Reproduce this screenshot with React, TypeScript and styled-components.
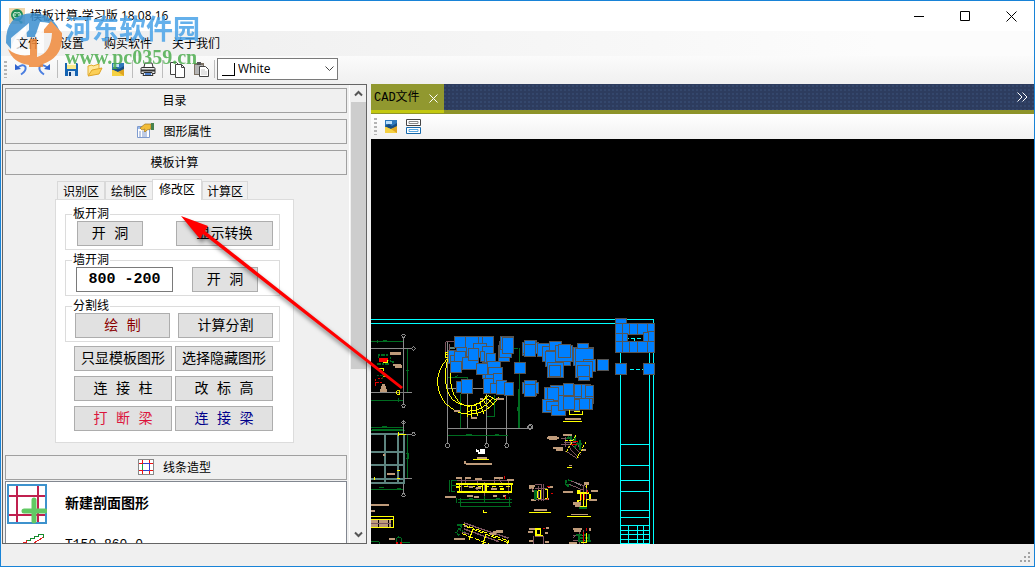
import React from "react";
import styled, { createGlobalStyle } from "styled-components";

const song = `"Noto Sans CJK SC", "Liberation Sans", sans-serif`;
const songFixed = `"Liberation Mono", "Noto Sans CJK SC", monospace`;

const GlobalStyle = createGlobalStyle`
  *, *::before, *::after { box-sizing: border-box; }
  body { margin: 0; background: #f0f0f0; color: #000; font: 12px/16px ${song}; }
  button, input, select { font: inherit; color: inherit; border-radius: 0; }
  svg { display: block; flex: none; }
`;

const Window = styled.div`
  position: relative;
  display: flex;
  flex-direction: column;
  height: 100vh;
  overflow: hidden;
  border: 1px solid #1883d7;
  background: #f0f0f0;
`;

const TitleBar = styled.header`
  display: flex;
  align-items: center;
  flex: none;
  height: 30px;
  padding: 0 8px;
  background: #fff;
`;

const Title = styled.h1`
  flex: 1;
  margin: 0 0 0 5px;
  font: 12px/16px "Open Sans", "Noto Sans CJK SC", sans-serif;
`;

const WindowButtons = styled.div`
  display: flex;
  margin-right: -8px;
`;

const WindowButton = styled.button`
  display: flex;
  align-items: center;
  justify-content: center;
  width: 46px;
  height: 29px;
  padding: 0;
  border: 0;
  background: none;
`;

const MenuBar = styled.nav`
  display: flex;
  align-items: center;
  flex: none;
  gap: 20px;
  height: 25px;
  padding: 0 15px 1px;
  background: linear-gradient(90deg, #f0f0f0 20%, #fcfcfc 85%);
`;

const MenuLink = styled.a`
  color: #000;
  text-decoration: none;
`;

const ToolBar = styled.div`
  display: flex;
  align-items: center;
  flex: none;
  height: 28px;
  padding: 0 0 2px 3px;
  background: linear-gradient(#fbfbfb, #f0f0f0);
`;

const Grip = styled.span`
  width: 3px;
  height: 17px;
  margin-right: 2px;
  background: repeating-linear-gradient(#b4b4b4 0 2px, transparent 2px 4px);
`;

const IconButton = styled.button`
  display: flex;
  align-items: center;
  justify-content: center;
  width: 23px;
  height: 22px;
  padding: 0;
  border: 0;
  background: none;
`;

const Separator = styled.span<{ $tight?: boolean }>`
  width: 1px;
  height: 18px;
  margin: 0 ${(p) => (p.$tight ? 2 : 3)}px;
  background: #bdbdbd;
`;

const ColorField = styled.label`
  position: relative;
  display: block;
`;

const ColorSelect = styled.select`
  appearance: none;
  display: block;
  width: 121px;
  height: 22px;
  padding: 0 20px;
  border: 1px solid #7a7a7a;
  background: #fff;
  font: 12px/18px "Open Sans", sans-serif;
`;

const Swatch = styled.span`
  position: absolute;
  left: 5px;
  top: 5px;
  width: 13px;
  height: 13px;
  border: solid #000;
  border-width: 0 1px 1px 0;
  background: #fff;
`;

const SelectArrow = styled.svg`
  position: absolute;
  right: 4px;
  top: 8px;
`;

const Body = styled.main`
  display: flex;
  flex: 1;
  min-height: 0;
  gap: 4px;
  padding-left: 1px;
`;

const SidePanel = styled.aside`
  display: flex;
  flex: none;
  width: 365px;
  border: 1px solid #646464;
`;

const SideContent = styled.div`
  flex: 1;
  overflow: hidden;
  padding: 3px 2px 0;
`;

const SectionButton = styled.button<{ $spaced?: boolean }>`
  display: flex;
  align-items: center;
  justify-content: center;
  gap: 9px;
  width: 100%;
  height: 25px;
  margin-bottom: ${(p) => (p.$spaced ? 6 : 0)}px;
  padding: 0 3px 2px 0;
  border: 1px solid #a0a0a0;
  background: #f0f0f0;
`;

const ScrollBar = styled.div`
  display: flex;
  flex-direction: column;
  align-items: center;
  width: 17px;
  border-left: 1px solid #fff;
`;

const ScrollButton = styled.button`
  display: flex;
  align-items: center;
  justify-content: center;
  width: 16px;
  height: 17px;
  padding: 0;
  border: 0;
  background: #f0f0f0;
`;

const ScrollTrack = styled.div`
  flex: 1;
  width: 15px;
`;

const ScrollThumb = styled.div`
  height: 63%;
  background: #cdcdcd;
`;

const Editor = styled.section`
  width: 239px;
  margin: 4px 0 12px 50px;
`;

const TabRow = styled.div`
  display: flex;
  align-items: flex-end;
  padding: 0 2px;
`;

const Tab = styled.button<{ $active?: boolean }>`
  position: relative;
  height: ${(p) => (p.$active ? 21 : 18)}px;
  margin-bottom: ${(p) => (p.$active ? -1 : 0)}px;
  margin-left: ${(p) => (p.$active ? -1 : 0)}px;
  padding: 0 ${(p) => (p.$active ? 6 : 5)}px ${(p) => (p.$active ? 2 : 0)}px;
  border: 1px solid #d9d9d9;
  border-bottom: 0;
  background: ${(p) => (p.$active ? "#fff" : "#f0f0f0")};
  line-height: 16px;

  & + & { border-left-width: ${(p) => (p.$active ? 1 : 0)}px; }
  &:last-child { padding: 0 4px; }
`;

const TabPage = styled.div`
  height: 244px;
  padding: 7px 13px 0 9px;
  border: 1px solid #dcdcdc;
  background: #fff;
`;

const Group = styled.fieldset`
  height: 43px;
  margin: 0 0 3px;
  padding: 0 6px 0 9px;
  border: 1px solid #dcdcdc;
  min-width: 0;
`;

const Legend = styled.legend`
  height: 14px;
  padding: 0 1px;
  margin-left: -3px;
  line-height: 12px;
`;

const GroupRow = styled.div<{ $packed?: boolean; $inset?: number }>`
  display: flex;
  justify-content: ${(p) => (p.$packed ? "flex-start" : "space-between")};
  gap: ${(p) => (p.$packed ? 19 : 8)}px;
  padding-left: ${(p) => p.$inset ?? 0}px;
`;

const ActionButton = styled.button<{ $width?: number; $color?: string }>`
  width: ${(p) => (p.$width ? p.$width + "px" : "auto")};
  height: 25px;
  padding: 0;
  border: 1px solid #adadad;
  background: #e1e1e1;
  color: ${(p) => p.$color ?? "#000"};
  font: 14px/20px ${songFixed};
  white-space: pre;
`;

const SizeInput = styled.input`
  width: 97px;
  height: 25px;
  padding: 0;
  border: 1px solid #7a7a7a;
  background: #fff;
  font: bold 15px/20px ${songFixed};
  text-align: center;
`;

const ActionGrid = styled.div`
  display: grid;
  grid-template-columns: 1fr 1fr;
  gap: 5px 3px;
  margin: 4px 7px 0 9px;
`;

const ShapeList = styled.ul`
  margin: 1px 0 0;
  padding: 1px;
  list-style: none;
  border: 1px solid #828790;
  background: #fff;
`;

const ShapeItem = styled.li<{ $strong?: boolean }>`
  display: flex;
  align-items: center;
  gap: 18px;
  height: 41px;
  font: ${(p) => (p.$strong ? "bold 14px" : "13px")} / 18px ${songFixed};
`;

const Document = styled.section`
  display: flex;
  flex: 1;
  flex-direction: column;
  min-width: 0;
`;

const DocTabs = styled.div`
  display: flex;
  align-items: stretch;
  flex: none;
  height: 30px;
  border-bottom: 4px solid #8e942a;
  background: #2d3c5e radial-gradient(#34476c 1px, transparent 1px) 0 0 / 4px 4px;
`;

const DocTab = styled.div`
  display: flex;
  align-items: center;
  gap: 9px;
  width: 73px;
  height: 29px;
  padding: 2px 0 0 3px;
  border-bottom: 3px solid #c3c80f;
  background: #91982f;
  font: 12px/16px ${songFixed};
`;

const PlainButton = styled.button`
  display: flex;
  align-items: center;
  padding: 0;
  border: 0;
  background: none;
`;

const Overflow = styled(PlainButton)`
  margin: 0 6px 0 auto;
`;

const DocToolBar = styled(ToolBar)`
  height: 25px;
  padding: 0 0 0 3px;
  background: linear-gradient(#fff, #f1f1f1);
`;

const Canvas = styled.div`
  flex: 1;
  min-height: 0;
  overflow: hidden;
  background: #000;
`;

const StatusBar = styled.footer`
  display: flex;
  align-items: flex-end;
  justify-content: flex-end;
  flex: none;
  height: 22px;
  padding: 3px;
`;

const Watermark = styled.div`
  position: absolute;
  left: 4px;
  top: 10px;
  display: flex;
  gap: 3px;
  opacity: 0.85;
  pointer-events: none;
`;

const WatermarkText = styled.div`
  display: flex;
  flex-direction: column;
`;

const WatermarkName = styled.span`
  color: #4aa3e8;
  font: bold 27px/34px "Noto Sans CJK SC", sans-serif;
`;

const WatermarkSite = styled.span`
  color: #4fae50;
  font: bold 20px/24px "Liberation Serif", serif;
`;

const Pointer = styled.svg`
  position: absolute;
  left: 170px;
  top: 200px;
  pointer-events: none;
  filter: drop-shadow(2px 4px 2px rgba(0, 0, 0, 0.5));
`;

const AppIcon = () => (
  <svg width="16" height="16" viewBox="0 0 16 16">
    <rect width="16" height="16" fill="#efd6ac" />
    <circle cx="8" cy="7" r="6" fill="#1d8c55" />
    <path d="M4 7q1-4 4-2q3-2 4 2q-1 4-4 3q-3 1-4-3M6 6v2M10 6v2" fill="none" stroke="#e4f5e6" />
    <path d="M8 11l6 3-2 2z" fill="#1d8c55" />
  </svg>
);

const Undo = ({ flip }: { flip?: boolean }) => (
  <svg width="14" height="14" viewBox="0 0 14 14">
    <g transform={flip ? "translate(14 0) scale(-1 1)" : undefined} fill="none">
      <path d="M3 6Q9 1 11.500 5Q12.500 9 7 12.500" stroke="#4c7fe0" strokeWidth="2" />
      <path d="M1 2v6l6-1z" fill="#2e62cf" />
    </g>
  </svg>
);

const SaveIcon = () => (
  <svg width="15" height="15" viewBox="0 0 15 15">
    <path d="M1 1h12l1 1v12H1z" fill="#1564b3" />
    <path d="M3 1h9v6H3z" fill="#f8e98c" />
    <path d="M3 1h9v2H3z" fill="#fffbe0" />
    <path d="M4 9h7v5H4z" fill="#dce9f7" />
    <path d="M5 10h2v4H5z" fill="#123c75" />
  </svg>
);

const OpenIcon = () => (
  <svg width="16" height="15" viewBox="0 0 16 15">
    <path d="M1 13V4l4-1 1 1 6-2v4" fill="#ffe79a" stroke="#e3ad2e" />
    <path d="M1 14l4-6 10-2-3 6z" fill="#fbcf57" stroke="#dea324" />
  </svg>
);

const ImageIcon = () => (
  <svg width="14" height="15" viewBox="0 0 14 15">
    <path d="M1 1h12v13H1z" fill="#e9bd33" />
    <path d="M1 1h12v7H1z" fill="#2f78bb" />
    <path d="M2 2h6v3H2z" fill="#bde0fa" />
    <path d="M1 7l4-2 3 2 5-3v6L8 11z" fill="#174d82" />
    <path d="M1 8l6 2 6-2v6H1z" fill="#f5d142" />
    <path d="M7 10l6-3v7z" fill="#dfa521" />
  </svg>
);

const PrintIcon = () => (
  <svg width="16" height="15" viewBox="0 0 16 15" fill="none" stroke="#333">
    <path d="M4 5l1-4h7l1 4" fill="#fff" />
    <path d="M1 6.500q0-1 1-1h12q1 0 1 1v5H1z" fill="#ececec" />
    <path d="M1 8.500h14" strokeWidth="2" />
    <path d="M4 10.500h8l1 3H3z" fill="#e6effc" />
    <path d="M5 12h6" stroke="#4f82cf" strokeWidth="2" />
  </svg>
);

const CopyIcon = () => (
  <svg width="17" height="17" viewBox="0 0 17 17" fill="#fff" stroke="#444">
    <path d="M1.500 1.500h6l3 3v9h-9z" />
    <path d="M6.500 3.500h6l3 3v10h-9z" />
    <path d="M12.500 3.500v3h3" fill="none" />
  </svg>
);

const PasteIcon = () => (
  <svg width="16" height="16" viewBox="0 0 16 16">
    <path d="M1 2h10v12H1z" fill="#7d7264" />
    <path d="M2 4h8v9H2z" fill="#b5b5b5" />
    <path d="M4 1h4v3H4z" fill="#555" />
    <path d="M6.500 5.500h6l3 3v7h-9z" fill="#fff" stroke="#444" />
    <path d="M8 9h4M8 11h6M8 13h6" stroke="#c9c9c9" />
  </svg>
);

const PropertyIcon = () => (
  <svg width="17" height="15" viewBox="0 0 17 15">
    <path d="M.500 3.500h12v11H.500z" fill="#fff" stroke="#7e9bcf" />
    <path d="M1 4h11v2H1z" fill="#9bb9e8" />
    <path d="M2 9h2M5 9h5M2 11h2M5 11h5M2 13h2M5 13h5" stroke="#7d97cb" />
    <path d="M3 5l5-4 6 0v5l-4 1-2 2-1-1 1-2-3 1z" fill="#f3bd38" stroke="#9d7523" strokeWidth=".7" />
    <path d="M14 0h3v7h-3z" fill="#47824e" />
  </svg>
);

const LinesIcon = () => (
  <svg width="16" height="16" viewBox="0 0 16 16" fill="none" shapeRendering="crispEdges">
    <path d="M.500 .500h15v15H.500z" fill="#fff" stroke="#888" />
    <path d="M4.500 1v14M11.500 1v14M1 4.500h14M1 11.500h14" stroke="#e11" />
    <path d="M4.500 5v6" stroke="#2a4" />
    <path d="M5 4.500h6.500v7H5" stroke="#34c" />
  </svg>
);

const NewSectionIcon = () => (
  <svg width="40" height="40" viewBox="0 0 40 40" fill="none">
    <path d="M1 1h38v38H1z" fill="#fff" stroke="#3d92cd" strokeWidth="2" />
    <path d="M10 2v36M31 2v36M2 12h36M2 31h36" stroke="#c0204f" strokeWidth="2" />
    <path d="M27 16v21M17 27h21" stroke="#62c964" strokeWidth="5" strokeLinecap="round" />
  </svg>
);

const StairIcon = () => (
  <svg width="40" height="40" viewBox="0 0 40 40" fill="none" shapeRendering="crispEdges">
    <path d="M16 17.500h3v-2h4v-2h4v-2h4v-2h5v3L22 21" stroke="#e02020" />
    <path d="M20 15.500h3v-2h4v-2h4v-2h5v3" stroke="#148a2c" />
  </svg>
);

const LayersIcon = () => (
  <svg width="15" height="15" viewBox="0 0 15 15" fill="#fff">
    <path d="M.500 .500h14v6H.500z" stroke="#444" />
    <path d="M3 2.500h9v2H3z" stroke="#888" />
    <path d="M.500 8.500h14v6H.500z" stroke="#1769ab" />
    <path d="M3 10.500h9v2H3z" stroke="#58a6df" />
  </svg>
);

type Box = [number, number, number, number];

const stairNodes: Box[] = [
  [249, 120, 34, 40], [268, 79, 34, 34], [312, 79, 34, 34], [340, 79, 34, 34], [352, 79, 34, 34],
  [300, 79, 40, 60], [325, 100, 40, 44], [350, 108, 36, 50], [256, 134, 34, 38], [272, 110, 34, 36],
  [256, 152, 34, 36], [268, 122, 34, 34], [290, 142, 50, 38], [308, 115, 34, 38], [345, 122, 15, 32],
  [362, 130, 30, 50], [350, 180, 45, 26], [366, 152, 40, 44], [334, 158, 35, 36], [370, 172, 42, 46],
  [360, 192, 48, 36], [355, 204, 40, 46], [384, 190, 30, 58], [376, 218, 34, 34], [392, 210, 34, 45],
  [418, 216, 28, 40], [272, 213, 28, 36], [288, 207, 36, 44], [398, 104, 36, 52], [402, 92, 38, 50],
  [406, 79, 40, 40], [411, 80, 34, 50], [447, 156, 36, 36], [472, 97, 36, 40], [478, 90, 36, 34],
  [472, 216, 36, 36], [478, 210, 36, 48],
];

const bayNodes: Box[] = [
  [36, 96, 50, 36], [42, 90, 36, 40], [42, 103, 36, 36], [13, 156, 34, 35], [82, 99, 54, 40],
  [96, 108, 64, 46], [118, 94, 36, 34], [108, 120, 74, 46], [106, 122, 32, 48], [136, 104, 52, 50],
  [145, 102, 36, 40], [112, 156, 48, 46], [118, 165, 34, 36], [188, 112, 62, 56], [202, 99, 34, 34],
  [196, 115, 54, 40], [220, 146, 36, 38], [196, 154, 52, 48], [205, 177, 34, 34], [202, 166, 36, 34],
  [262, 148, 34, 34], [36, 216, 50, 34], [42, 210, 36, 44], [42, 223, 36, 36], [102, 232, 62, 60],
  [120, 226, 60, 66], [112, 232, 34, 40], [158, 220, 34, 74], [192, 223, 22, 60], [212, 223, 30, 60],
  [226, 226, 24, 54], [97, 268, 34, 40], [108, 274, 70, 28], [124, 284, 44, 34], [186, 264, 62, 34],
  [205, 263, 34, 36], [184, 268, 24, 34], [145, 256, 38, 46], [160, 258, 34, 40],
  [226, 226, 24, 34], [192, 223, 22, 38], [158, 220, 34, 38],
];

const frameNodes: Box[] = [
  [316, 25, 34, 34], [316, 40, 24, 30], [316, 68, 22, 30], [316, 94, 24, 34], [411, 40, 23, 26],
  [411, 64, 23, 30], [411, 92, 23, 36], [337, 40, 24, 34], [358, 40, 24, 34], [380, 40, 34, 34],
  [400, 66, 16, 30], [336, 70, 16, 26], [337, 94, 24, 34], [358, 94, 24, 34], [380, 94, 34, 34],
  [316, 160, 34, 34], [400, 160, 34, 34],
];

const Nodes = ({ items }: { items: Box[] }) => (
  <g fill="#0080ff" stroke="#555" strokeWidth="3">
    {items.map(([x, y, w, h], i) => (
      <rect key={i} x={x + 1} y={y + 1} width={w - 2} height={h - 2} />
    ))}
  </g>
);

const G = "#006c20";
const B = "#bf9b7a";
const M = "#7d5560";
const Y = "#ff0";
const C = "#0ff";
const W = "#8a8a8a";
const T = "#5d8580";

const Drawing = () => (
  <svg width="100%" height="100%" fill="none" strokeWidth="3" shapeRendering="crispEdges">
    {/* column plan and spiral stair */}
    <g transform="translate(-5.800 171.200) scale(.33333)">
      <path d="M0 28H866M0 40H752" stroke={C} />
      <path d="M0 94H115M127 115V247M0 270H115M36 90V98M52 90h14M100 262v12M0 352H115M50 348h16M122 180h8M20 358H115" stroke={G} />
      <path d="M115 82V282M0 115H140M0 247H140M115 342V390M115 372H140" stroke={W} />
      <g stroke={W}>
        <circle cx="115" cy="77" r="5" /><circle cx="145" cy="115" r="5" />
        <circle cx="115" cy="287" r="5" /><circle cx="115" cy="337" r="5" /><circle cx="145" cy="372" r="5" />
      </g>
      <path d="M38 134h34M34 162h40M40 130v16M76 140v14M52 184v24M36 196h20M66 150l22 6" stroke={G} strokeWidth="5" strokeDasharray="6 2" />
      <path d="M78 129h30M84 164h24M88 168h22M46 232h16M44 240h20M50 226h8M74 130h10" stroke={B} strokeWidth="8" />
      <path d="M42 142h26v14H42z" fill="#f00" />
      <path d="M30 206v20M28 216h22M38 204h12" stroke="#e00000" strokeDasharray="6 2" />
      <path d="M42 176h14v6M52 200h14M54 158h14M66 148v8M94 242h10v10H94zM98 372h24M100 368v8" stroke={Y} />
      <path d="M247 95V350M307 230V355M364 240V380M424 250V380M247 355H484M247 235H360M247 355V390" stroke={W} />
      <path d="M241 126V95H270M252 120V100" stroke={M} />
      <path d="M254 114h14" stroke={T} strokeWidth="6" />
      <path d="M247 202H307V235M287 250V355M387 255V320H364M461 235V355M435 355H465M247 376H428M305 372h16M388 372h12M268 200l10-4" stroke={G} />
      <path d="M463 112V235" stroke={G} strokeDasharray="12 8" />
      <circle cx="493" cy="351" r="6" stroke={W} />
      <g stroke={Y}>
        <path d="M247 145A97 97 0 1 0 400 260M247 145C239 185 238 225 250 250A66 66 0 0 0 365 255M258 184C250 230 270 285 310 288Q350 284 370 255" />
        <path d="M240 126h12v16h-12zM242 134h9M306 286V320M318 286v36M332 284l5 34M344 278l12 32M354 270l18 26M362 262l24 22M370 256l24 14M306 303Q350 306 384 262" />
      </g>
      <path d="M266 303h18M316 324h20M392 266h24M344 266h10" stroke={B} strokeWidth="6" />
      <Nodes items={stairNodes} />
    </g>

    {/* node bays and the title block head */}
    <g transform="translate(139.200 171.200) scale(.33333)">
      <path d="M331 125V740M418 125V740M430 27V740" stroke={C} />
      <path d="M358 178h42" stroke={C} strokeDasharray="12 6" />
      <path d="M352 92v-7h48v8M373 85v8" stroke={C} strokeDasharray="12 6" />
      <path d="M10 115h14M28 115V235M28 235V355M0 355h30M22 290h6v12h-6z" stroke={G} />
      <path d="M34 115h8M34 235h8M32 355h22" stroke={W} />
      <circle cx="61" cy="350" r="7" stroke={W} />
      <Nodes items={bayNodes} />
      <Nodes items={frameNodes} />
      <path d="M179 300v13h37v-10M190 304h18M160 334h56" stroke={Y} />
      <path d="M163 327h50M112 380h28M160 374h24" stroke={B} strokeWidth="6" />
    </g>

    {/* beam grid, long sections and stair section */}
    <g transform="translate(-5.800 281.200) scale(.33333)">
      <path d="M0 40H115M0 96H115M0 134H115M0 176H118M0 188H115M58 42V188M99 40V188M115 40V190" stroke={T} strokeWidth="6" />
      <path d="M0 22H115M0 32H118M127 44V176M0 208H115M50 18h12M122 100h8v16h-8M42 202h14M96 204h12" stroke={G} />
      <path d="M115 0V36M115 190V220M115 42H140M115 176H140M247 0V70M364 25V70M424 0V70M247 25H480" stroke={W} />
      <g stroke={W}>
        <circle cx="145" cy="42" r="5" /><circle cx="115" cy="225" r="5" />
        <circle cx="247" cy="76" r="6" /><circle cx="365" cy="76" r="6" /><circle cx="425" cy="76" r="6" />
      </g>
      <path d="M98 42h24M100 36v10M95 150h8M95 174h8M28 170v10" stroke={Y} strokeWidth="4" />
      <path d="M18 254h52M18 272h12M64 160h26M52 104h6M70 356h20" stroke={B} strokeWidth="6" />
      <path d="M0 290H86V322H0M0 297H86" stroke={Y} />
      <path d="M0 304H76M0 316H76" stroke={B} strokeWidth="9" strokeDasharray="9 1" />
      <path d="M18 310H76" stroke={M} />
      <path d="M18 364h24v10M94 366v-14h14v14H134M101 346v6" stroke={G} />
      <path d="M96 364v10M108 364v10" stroke="#e00000" strokeWidth="5" />
      <path d="M247 46H428M303 43h12M388 43h12" stroke={G} />
      <path d="M334 85v8h6v5h16v-4h-8v-4h10" stroke="#fff" strokeWidth="5" />
      <path d="M324 118h48M352 276h12M354 270v6" stroke={Y} />
      <path d="M334 112h30M303 132h78M298 122v8" stroke={B} strokeWidth="6" />
      <path d="M253 180v36M260 182v34M256 180h20M256 196h16M256 214h14M274 234v14M286 232v28M358 226v22M432 230v30M278 238H440M278 246H440M284 259H436M312 236h12M392 236h12" stroke={G} />
      <path d="M276 182H430M288 172v44M302 170v20M336 176v20M358 186v40M388 174v20M400 170l10 22M430 176v46M300 190q10 14 22 10M330 204l12 8M380 198q8 16 16 10" stroke={M} />
      <path d="M272 192H444M276 216H440" stroke={Y} strokeWidth="6" />
      <path d="M282 192V216M352 192V216M362 192V216M438 192V216M272 200h12M404 206h12" stroke={Y} strokeWidth="4" />
      <path d="M274 200H440" stroke={Y} strokeDasharray="12 9" />
      <path d="M272 174h18M300 174h18M330 176h20M386 174h26M424 178h22M238 230h34M310 200h14M332 204h16M378 206h18M306 226h16M326 230h14M382 226h14M412 226h10" stroke={B} strokeWidth="6" />
      <path d="M418 168v8M420 228v8" stroke="#e00000" />
      <path d="M276 314h14l-6 14 14 8M270 336l14 10M282 326l-10 12" stroke={G} strokeWidth="5" strokeDasharray="4 2" />
      <path d="M292 312L430 362M300 318L424 366M290 340L420 390" stroke={Y} strokeDasharray="16 5" />
      <path d="M296 308L430 354M296 326L400 364M290 336L312 342" stroke={M} strokeWidth="4" />
      <path d="M322 330l-10 28M362 346l-10 28M430 360l-6 20" stroke={Y} strokeWidth="4" />
      <path d="M382 334h30M392 332h22M266 356h34M374 342h18M296 316h10" stroke={B} strokeWidth="6" />
    </g>

    {/* joint details and title block */}
    <g transform="translate(144.200 281.200) scale(.33333)">
      <path d="M316 73H403M316 136H403M316 181H403M316 214H403M316 271H403M316 292H403M316 316H403M316 331H403M316 343H403M316 358H403M316 370H403M340 316V390M367 316V390M385 316V390" stroke={C} />
      <path d="M144 4H200M156 142h14M42 277H107M154 289H227" stroke={Y} />
      <path d="M160 136h10M56 269h38M168 283h50" stroke={B} strokeWidth="5" />
      <path d="M96 52h36M100 56h24M144 44h24M114 84h28M122 88h22M198 88h14" stroke={B} strokeWidth="6" />
      <path d="M136 56h30v18h-30M150 50v30M168 70l30 34M158 78l32 34M150 92l34 22M176 60l24 30M146 66h34" stroke={M} />
      <path d="M180 58v-10M158 50l24 14M188 66l-10 16M154 56l16-6M194 60v30M186 72h14" stroke={G} strokeWidth="5" />
      <path d="M182 45L152 98M213 64L186 112M150 62h24" stroke={Y} strokeDasharray="9 3" />
      <path d="M168 72h18M174 64h14" stroke="#e00000" />
      <path d="M40 196h18M42 204h14M98 200h14M46 240h16M50 212h10M92 236h10" stroke={B} strokeWidth="6" />
      <path d="M70 196V242M84 190V242M60 206h36M60 238h36M78 192v50M60 194h20M48 204l10 10" stroke={M} />
      <path d="M59 208v30M64 208v28" stroke={G} strokeWidth="4" />
      <path d="M68 212h8v22h-8zM88 208h10v28H88" stroke={Y} />
      <path d="M96 200h8M98 232v8M106 220h6" stroke="#e00000" />
      <path d="M152 180v14h14M158 178l12 4M150 190l10 10" stroke={G} strokeWidth="5" strokeDasharray="4 1" />
      <path d="M166 182L212 198M162 192L204 210M204 196V262M196 210V262M214 200V250" stroke={M} />
      <path d="M184 218H222M196 222v18h-8v18h26v-20h10v-18M214 194v10M204 220v40M186 212h8" stroke={Y} strokeWidth="4" />
      <path d="M180 188l18 8" stroke={W} />
      <path d="M198 222v18M207 222v18M218 210v8" stroke="#e00000" />
      <path d="M142 216h30M174 250h24M220 240h26M228 212h20M206 190h14M180 256h14" stroke={B} strokeWidth="7" />
      <path d="M192 264h22" stroke={G} strokeWidth="7" />
      <path d="M62 326h14v18H62zM58 345h24" stroke={Y} strokeWidth="4" />
      <path d="M56 346V390M86 346V390M58 348h28" stroke={M} />
      <path d="M40 326h20M38 336h16M42 362h10M88 338h10M92 324h8M90 364h10" stroke={B} strokeWidth="6" />
      <path d="M82 326h8" stroke="#e00000" />
      <path d="M172 346h42M172 362h42M192 336V370M204 330V374M186 340l-10 12" stroke={M} />
      <path d="M182 344h30M188 354h34M188 362h40M222 340v24M190 346v18" stroke={G} strokeWidth="6" strokeDasharray="9 1" />
      <path d="M214 338v30M196 366h18" stroke={Y} />
      <path d="M206 336v30M214 324v8" stroke="#e00000" />
      <path d="M174 326h26M176 332h22M162 368h22M220 328h8" stroke={B} strokeWidth="7" />
    </g>
  </svg>
);

const Chevron = ({ up }: { up?: boolean }) => (
  <svg width="9" height="7" viewBox="0 0 9 7" fill="none" stroke="#555" strokeWidth="2">
    <path d={up ? "M1 5.500l3.500-3.500 3.500 3.500" : "M1 1.500l3.500 3.500 3.500-3.500"} />
  </svg>
);

export default function App() {
  return (
    <>
      <GlobalStyle />
      <Window>
        <TitleBar>
          <AppIcon />
          <Title>模板计算-学习版 18.08.16</Title>
          <WindowButtons>
            <WindowButton aria-label="最小化">
              <svg width="11" height="11" stroke="#000"><path d="M0 5.500h10" /></svg>
            </WindowButton>
            <WindowButton aria-label="最大化">
              <svg width="11" height="11" fill="none" stroke="#000"><path d="M.500 .500h9v9h-9z" /></svg>
            </WindowButton>
            <WindowButton aria-label="关闭">
              <svg width="11" height="11" stroke="#000"><path d="M.500 .500l10 10M10.500 .500l-10 10" /></svg>
            </WindowButton>
          </WindowButtons>
        </TitleBar>

        <MenuBar>
          {["文件", "设置", "购买软件", "关于我们"].map((item) => (
            <MenuLink key={item} href="#">{item}</MenuLink>
          ))}
        </MenuBar>

        <ToolBar>
          <Grip />
          <IconButton aria-label="撤销"><Undo /></IconButton>
          <IconButton aria-label="重做"><Undo flip /></IconButton>
          <Separator $tight />
          <IconButton aria-label="保存"><SaveIcon /></IconButton>
          <IconButton aria-label="打开"><OpenIcon /></IconButton>
          <IconButton aria-label="图片"><ImageIcon /></IconButton>
          <Separator />
          <IconButton aria-label="打印"><PrintIcon /></IconButton>
          <Separator />
          <IconButton aria-label="复制"><CopyIcon /></IconButton>
          <IconButton aria-label="粘贴"><PasteIcon /></IconButton>
          <Separator $tight />
          <ColorField>
            <ColorSelect aria-label="颜色" defaultValue="White">
              <option>White</option>
            </ColorSelect>
            <Swatch />
            <SelectArrow width="9" height="6" fill="none" stroke="#444">
              <path d="M.500 .500l4 4 4-4" />
            </SelectArrow>
          </ColorField>
        </ToolBar>

        <Body>
          <SidePanel>
            <SideContent>
              <SectionButton $spaced>目录</SectionButton>
              <SectionButton $spaced><PropertyIcon />图形属性</SectionButton>
              <SectionButton>模板计算</SectionButton>

              <Editor>
                <TabRow role="tablist">
                  <Tab role="tab">识别区</Tab>
                  <Tab role="tab">绘制区</Tab>
                  <Tab role="tab" $active aria-selected>修改区</Tab>
                  <Tab role="tab">计算区</Tab>
                </TabRow>
                <TabPage>
                  <Group>
                    <Legend>板开洞</Legend>
                    <GroupRow $inset={2}>
                      <ActionButton $width={66}>开 洞</ActionButton>
                      <ActionButton $width={97}>显示转换</ActionButton>
                    </GroupRow>
                  </Group>
                  <Group>
                    <Legend>墙开洞</Legend>
                    <GroupRow $packed $inset={1}>
                      <SizeInput aria-label="墙开洞尺寸" defaultValue="800 -200" />
                      <ActionButton $width={66}>开 洞</ActionButton>
                    </GroupRow>
                  </Group>
                  <Group>
                    <Legend>分割线</Legend>
                    <GroupRow>
                      <ActionButton $width={95} $color="#8b0000">绘 制</ActionButton>
                      <ActionButton $width={95}>计算分割</ActionButton>
                    </GroupRow>
                  </Group>
                  <ActionGrid>
                    <ActionButton>只显模板图形</ActionButton>
                    <ActionButton>选择隐藏图形</ActionButton>
                    <ActionButton>连 接 柱</ActionButton>
                    <ActionButton>改 标 高</ActionButton>
                    <ActionButton $color="#dc143c">打 断 梁</ActionButton>
                    <ActionButton $color="#00008b">连 接 梁</ActionButton>
                  </ActionGrid>
                </TabPage>
              </Editor>

              <SectionButton><LinesIcon />线条造型</SectionButton>
              <ShapeList>
                <ShapeItem $strong><NewSectionIcon />新建剖面图形</ShapeItem>
                <ShapeItem><StairIcon />T150-860-0</ShapeItem>
              </ShapeList>
            </SideContent>
            <ScrollBar>
              <ScrollButton aria-label="向上"><Chevron up /></ScrollButton>
              <ScrollTrack><ScrollThumb /></ScrollTrack>
              <ScrollButton aria-label="向下"><Chevron /></ScrollButton>
            </ScrollBar>
          </SidePanel>

          <Document>
            <DocTabs>
              <DocTab>
                CAD文件
                <PlainButton aria-label="关闭标签">
                  <svg width="9" height="9" stroke="#fff"><path d="M.500 .500l8 8M8.500 .500l-8 8" /></svg>
                </PlainButton>
              </DocTab>
              <Overflow aria-label="更多">
                <svg width="11" height="10" fill="none" stroke="#fff"><path d="M.500 .500l4.500 4.500-4.500 4.500M5.500 .500l4.500 4.500-4.500 4.500" /></svg>
              </Overflow>
            </DocTabs>
            <DocToolBar>
              <Grip />
              <IconButton aria-label="图片"><ImageIcon /></IconButton>
              <IconButton aria-label="图层"><LayersIcon /></IconButton>
            </DocToolBar>
            <Canvas><Drawing /></Canvas>
          </Document>
        </Body>

        <StatusBar>
          <svg width="11" height="11" fill="#a3a3a3">
            <path d="M8 0h2v2H8zM8 4h2v2H8zM4 4h2v2H4zM8 8h2v2H8zM4 8h2v2H4zM0 8h2v2H0z" />
          </svg>
        </StatusBar>

        <Watermark>
          <svg width="57" height="57" viewBox="0 0 57 57">
            <path d="M1 32Q0 3 28 2Q50 3 56 24L44 12Q24 8 14 22Q8 28 6 38z" fill="#3b8fd0" />
            <path d="M20 8h16l-6 18h-8z" fill="#3b8fd0" />
            <path d="M6 27L24 12v7L15 28v10h12v6H6z" fill="#fff" opacity=".9" />
            <path d="M3 38Q12 46 25 44V28h7v18Q46 42 47 22H36L46 10L57 22Q59 46 38 53V56H24V54Q8 52 3 38z" fill="#f08a3c" />
            <path d="M30 24l9-8v26h-6V28z" fill="#fff" opacity=".9" />
          </svg>
          <WatermarkText>
            <WatermarkName>河东软件园</WatermarkName>
            <WatermarkSite>www.pc0359.cn</WatermarkSite>
          </WatermarkText>
        </Watermark>

        <Pointer width="240" height="200" viewBox="0 0 240 200">
          <path d="M10 15L37 25L34 30L232 186L230 188L32 33L29 38z" fill="#f00" />
        </Pointer>
      </Window>
    </>
  );
}
